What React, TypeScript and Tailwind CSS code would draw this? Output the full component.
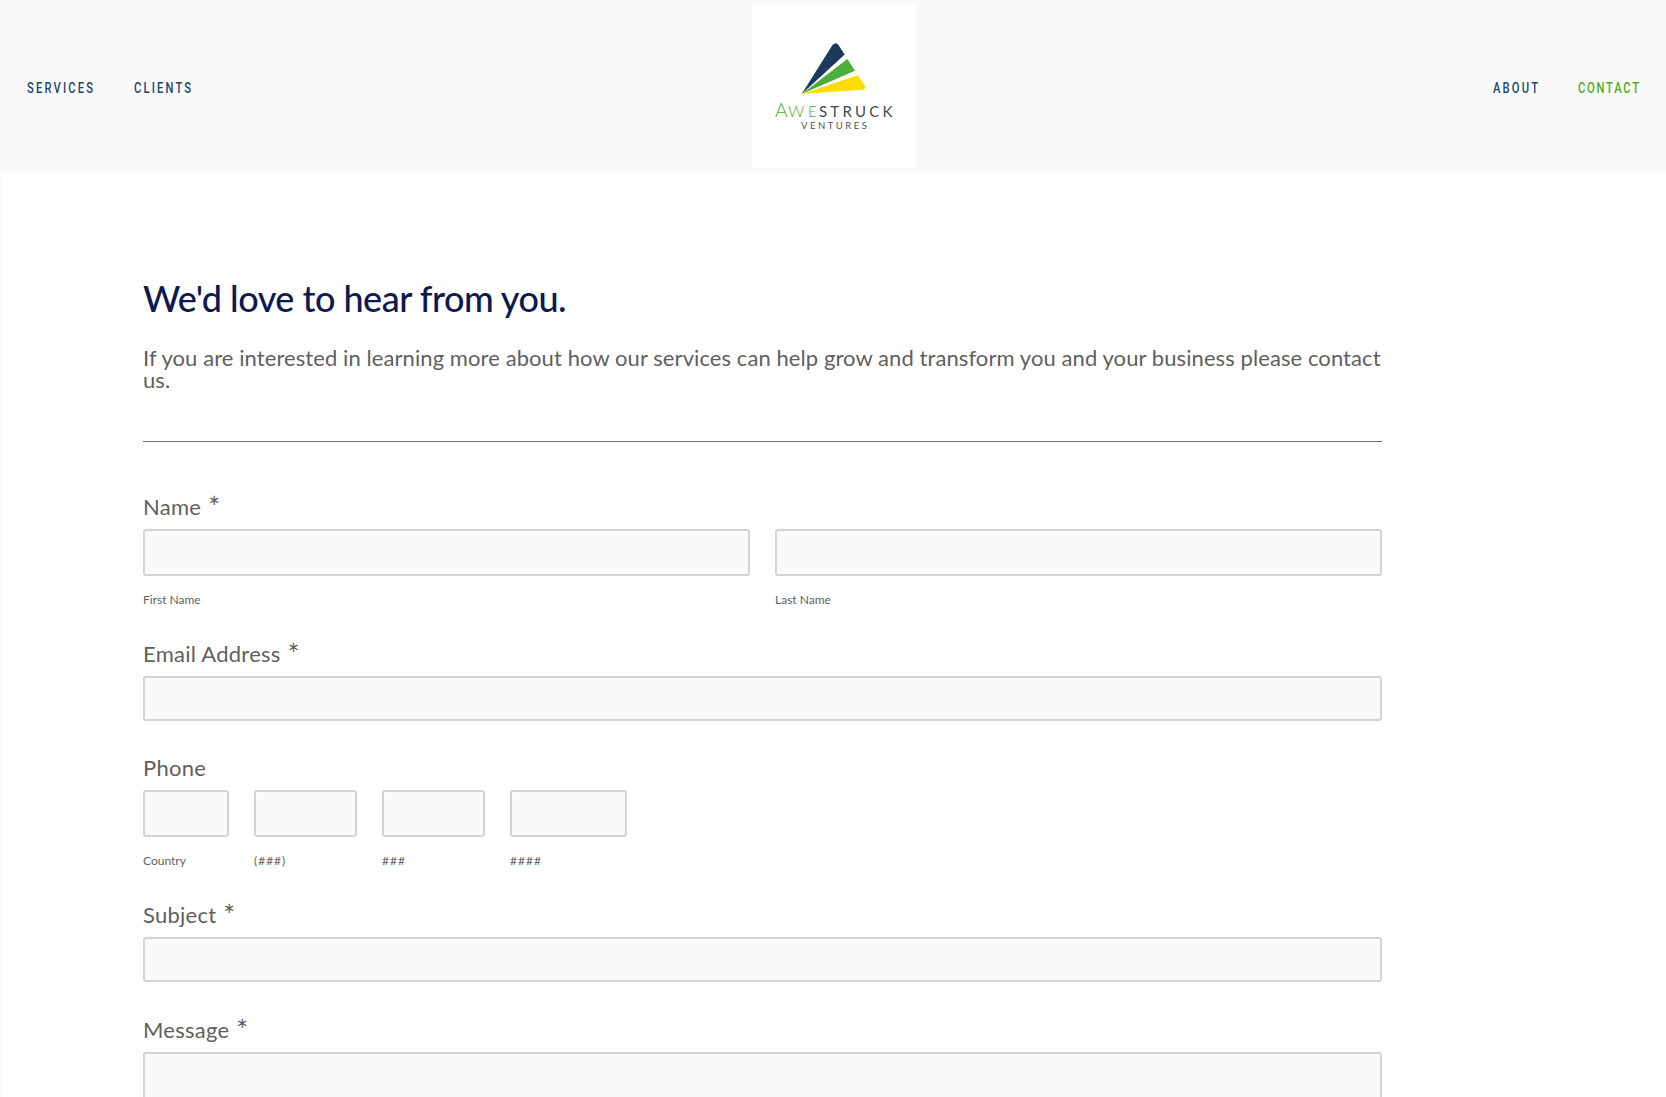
const body = "font-['Lato','Noto_Sans',sans-serif]";

function Logo() {
  return (
    <svg width="164" height="164" viewBox="0 0 164 164">
      <path d="M49.7 90 L80.5 41 Q84 37.5 86.5 41 L92.7 50.5 Z" fill="#1b3a5c" />
      <path d="M49.7 90 L95.3 55 L103 66.7 Z" fill="#4caf3c" />
      <path d="M49.7 90 L105.7 71.3 L112.5 81 Q115 85.5 110 85.8 Z" fill="#ffdc00" />
      <text y="113" fontFamily="Lato, sans-serif" fontWeight="300" fontSize="15" fill="#4fae3a">
        <tspan x="23" fontSize="19">A</tspan>
        <tspan x="36" fontSize="16">W</tspan>
        <tspan x="56">E</tspan>
      </text>
      <text x="67" y="113" fontFamily="Lato, sans-serif" fontWeight="400" fontSize="15" fill="#3f4a52" textLength="73.5" lengthAdjust="spacing">STRUCK</text>
      <text x="49" y="125" fontFamily="Lato, sans-serif" fontSize="9.5" fill="#4a5358" textLength="66" lengthAdjust="spacing">VENTURES</text>
    </svg>
  );
}

function NavLink({ label, width, green }: { label: string; width: string; green?: boolean }) {
  return (
    <a className={`block whitespace-nowrap origin-left scale-x-[0.8] font-['Roboto',sans-serif] text-[14px] leading-[20px] font-medium ${width} ${green ? 'text-[#4cad1f] tracking-[2.2px]' : 'text-[#1d4672] tracking-[2.7px]'}`}>
      {label}
    </a>
  );
}

function Label({ text, required }: { text: string; required?: boolean }) {
  return (
    <div className="text-[22px] leading-[26px] text-[#5f5f5f] tracking-[0.25px]">
      {text}
      {required && <span className="ml-[7px] text-[28px] leading-[20px] align-[-3px]">*</span>}
    </div>
  );
}

function Input({ className }: { className: string }) {
  return <input className={`block border-2 border-[#d4d4d4] rounded-[3px] bg-[#fafafa] ${className}`} />;
}

function Sub({ text, wide }: { text: string; wide?: boolean }) {
  return <div className={`mt-[16px] text-[12px] leading-[16px] text-[#636363] ${wide ? 'tracking-[1px]' : ''}`}>{text}</div>;
}

export default function App() {
  return (
    <div className={`h-[1097px] overflow-hidden bg-white border-l border-[#fafafa] ${body}`}>
      <header className="h-[172px] bg-[#fafafa] flex items-center justify-between pl-[26px] pr-[26px]">
        <nav className="w-[400px] pt-[3px] flex gap-[38px]">
          <NavLink label="SERVICES" width="w-[69px]" />
          <NavLink label="CLIENTS" width="w-[57px]" />
        </nav>
        <div className="bg-white w-[164px] h-[164px]">
          <Logo />
        </div>
        <nav className="w-[400px] pt-[3px] flex justify-end gap-[38px]">
          <NavLink label="ABOUT" width="w-[47px]" />
          <NavLink label="CONTACT" width="w-[62px]" green />
        </nav>
      </header>

      <main className="w-[1239px] ml-[142px]">
        <h1 className="mt-[102px] text-[36px] leading-[48px] font-medium text-[#0e1a4f] tracking-[-0.5px]">We'd love to hear from you.</h1>
        <p className="mt-[25px] text-[22px] leading-[22px] text-[#5f5f5f] tracking-[0.08px]">
          If you are interested in learning more about how our services can help grow and transform you and your business please contact us.
        </p>
        <hr className="mt-[50px] border-t border-[#6b6b6b]" />

        <div className="mt-[52px]">
          <Label text="Name" required />
          <div className="mt-[9px] grid grid-cols-2 gap-[25px]">
            <div>
              <Input className="w-full h-[47px]" />
              <Sub text="First Name" />
            </div>
            <div>
              <Input className="w-full h-[47px]" />
              <Sub text="Last Name" />
            </div>
          </div>
        </div>

        <div className="mt-[33px]">
          <Label text="Email Address" required />
          <Input className="mt-[9px] w-full h-[45px]" />
        </div>

        <div className="mt-[34px]">
          <Label text="Phone" />
          <div className="mt-[9px] flex gap-[25px]">
            <div>
              <Input className="w-[86px] h-[47px]" />
              <Sub text="Country" />
            </div>
            <div>
              <Input className="w-[103px] h-[47px]" />
              <Sub text="(###)" wide />
            </div>
            <div>
              <Input className="w-[103px] h-[47px]" />
              <Sub text="###" wide />
            </div>
            <div>
              <Input className="w-[117px] h-[47px]" />
              <Sub text="####" wide />
            </div>
          </div>
        </div>

        <div className="mt-[33px]">
          <Label text="Subject" required />
          <Input className="mt-[9px] w-full h-[45px]" />
        </div>

        <div className="mt-[35px]">
          <Label text="Message" required />
          <Input className="mt-[9px] w-full h-[120px]" />
        </div>
      </main>
    </div>
  );
}
